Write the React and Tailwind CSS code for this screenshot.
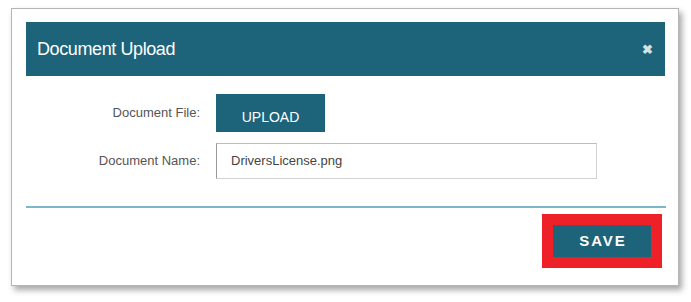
export default function App() {
  const font = { fontFamily: '"Liberation Sans", Arial, sans-serif' };
  return (
    <div className="w-[691px] h-[302px] bg-white pt-[8px] pl-[11px]" style={font}>
      <div className="w-[668px] h-[278px] bg-white border border-[#b5b5b5] shadow-[3px_4px_6px_rgba(0,0,0,0.35)] pt-[13px] pl-[14px] pr-[13px] flex flex-col">
        <div className="h-[54px] bg-[#1d637a] flex items-center justify-between pl-[11px] pr-[12px]">
          <span className="text-white text-[18px] tracking-[-0.4px]">Document Upload</span>
          <span className="text-[#d5e2e7] text-[13px] leading-none font-bold">✖</span>
        </div>
        <div className="flex flex-col pt-[18px]">
          <div className="flex items-center">
            <div className="w-[190px] text-right text-[13px] text-[#555] pr-[16px]">Document File:</div>
            <button className="w-[109px] h-[38px] bg-[#1d637a] text-white text-[14px] pt-[8px]">UPLOAD</button>
          </div>
          <div className="flex items-center mt-[11px]">
            <div className="w-[190px] text-right text-[13px] text-[#555] pr-[16px]">Document Name:</div>
            <div className="w-[381px] h-[36px] border border-[#d2d2d2] border-l-[#9a9a9a] border-t-[#bdbdbd] flex items-center pl-[14px] text-[13px] text-[#444]">
              DriversLicense.png
            </div>
          </div>
        </div>
        <div className="mt-[27px] h-[2px] bg-[#7ab7c9] w-[640px]"></div>
        <div className="flex justify-end pr-[3px] mt-[6px]">
          <div className="w-[120px] h-[54px] bg-[#ee2129] flex items-center justify-center">
            <div className="w-[98px] h-[32px] bg-[#1d637a] flex items-center justify-center text-white font-bold text-[15px] tracking-[2px] pl-[2px]">SAVE</div>
          </div>
        </div>
      </div>
    </div>
  );
}
